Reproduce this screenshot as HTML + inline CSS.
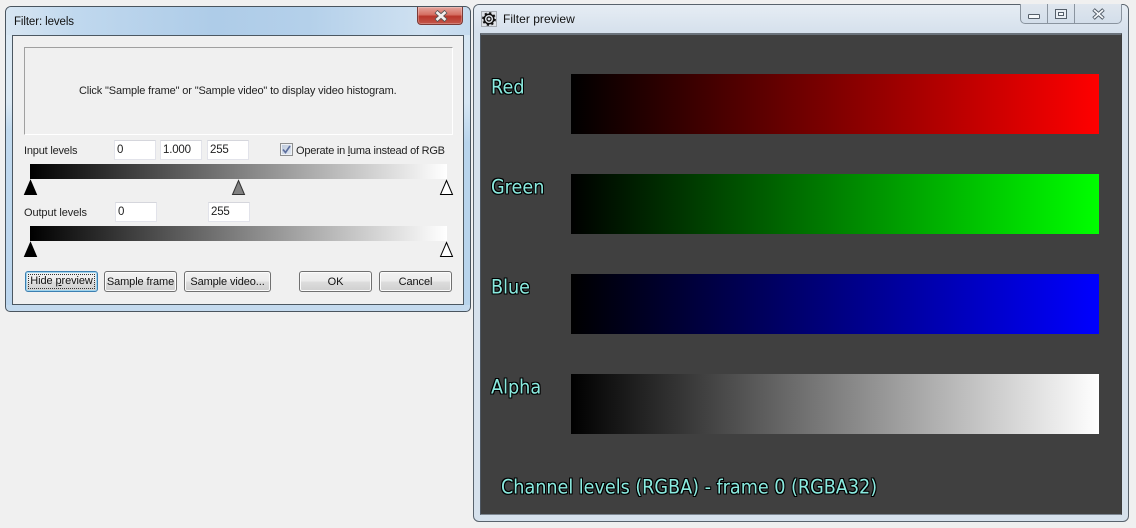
<!DOCTYPE html>
<html><head><meta charset="utf-8"><style>
html,body{margin:0;padding:0;width:1136px;height:528px;overflow:hidden;background:#f0f0f0;font-family:"Liberation Sans",sans-serif;}
div,span{position:absolute;box-sizing:border-box;}
.t{font-size:11px;color:#222;white-space:nowrap;letter-spacing:-.14px;line-height:14px;}
.in{background:#fff;border:1px solid #e2e3ea;border-top-color:#d5d6dc;height:20px;font-size:11.5px;line-height:19px;padding-left:2px;color:#222;letter-spacing:-.2px;}
.btn{top:271px;height:21px;border:1px solid #707070;border-radius:3px;background:linear-gradient(#f2f2f2 0,#ebebeb 48%,#dddddd 52%,#cfcfcf 100%);box-shadow:inset 0 0 0 1px #fbfbfb;font-size:11px;line-height:20px;text-align:center;color:#111;letter-spacing:-.1px;white-space:nowrap;}
.g{background:linear-gradient(90deg,#000,#fff);left:30px;width:417px;height:15px;}
.osd{font-family:"DejaVu Sans",sans-serif;font-size:18px;color:#8aeadf;white-space:nowrap;line-height:22px;transform-origin:0 50%;transform:scale(.98,1.08);text-shadow:1px 0 0 #000,-1px 0 0 #000,0 1px 0 #000,0 -1px 0 #000,1px 1px 0 #000,-1px -1px 0 #000,1px -1px 0 #000,-1px 1px 0 #000;}
.bar{left:571px;width:528px;height:60px;}
</style></head><body>

<!-- Left window -->
<div style="left:5px;top:6px;width:466px;height:306px;border:1px solid #4a555f;border-radius:6px 6px 5px 5px;background:#c4daee;"></div>
<div style="left:6px;top:7px;width:464px;height:28px;border-radius:5px 5px 0 0;background:linear-gradient(90deg,#d8e6f2 0,#c0d8ee 15%,#aecce8 45%,#b4d0ea 65%,#cfe1f1 90%,#c4daee 100%);"></div>
<div style="left:6px;top:35px;width:6px;height:270px;background:linear-gradient(#dbe9f4 0,#dbe9f4 25%,#c0d9ee 35%,#bcd6ee 100%);"></div>
<div style="left:464px;top:35px;width:6px;height:270px;background:linear-gradient(#d6e6f3 0,#d6e6f3 25%,#b8d4ec 40%,#b8d4ec 100%);"></div>
<div class="t" style="left:14px;top:15px;color:#111;font-size:11.5px;letter-spacing:-.1px;">Filter: levels</div>
<div style="left:417px;top:7px;width:46px;height:18px;border:1px solid #7a3a36;border-top:none;border-radius:0 0 4px 4px;background:linear-gradient(#e4a49c 0,#d66f62 45%,#b8352a 55%,#c4574a 100%);box-shadow:inset 0 0 0 1px rgba(255,255,255,.25);"></div>
<svg style="position:absolute;left:434px;top:10px" width="14" height="12"><path d="M2 1.5 L12 10.5 M12 1.5 L2 10.5" stroke="#555" stroke-width="4.4"/><path d="M2.5 2 L11.5 10 M11.5 2 L2.5 10" stroke="#f4efee" stroke-width="2.6"/></svg>

<div style="left:12px;top:35px;width:452px;height:270px;background:#f0f0f0;border:1px solid #4c5862;"></div>

<div style="left:24px;top:47px;width:429px;height:88px;border:1px solid;border-color:#a0a0a0 #ffffff #ffffff #a0a0a0;"></div>
<div class="t" style="left:79px;top:84px;">Click "Sample frame" or "Sample video" to display video histogram.</div>

<div class="t" style="left:24px;top:144px;letter-spacing:-.2px;">Input levels</div>
<div class="in" style="left:114px;top:140px;width:42px;">0</div>
<div class="in" style="left:160px;top:140px;width:42px;">1.000</div>
<div class="in" style="left:207px;top:140px;width:42px;">255</div>
<div style="left:280px;top:143px;width:13px;height:13px;border:1px solid #8e8f8f;background:linear-gradient(135deg,#bcc8da,#e4eaf3);box-shadow:inset 0 0 0 1px #eef1f6;"></div>
<svg style="position:absolute;left:280px;top:143px" width="13" height="13"><path d="M3 6.5 L5.5 9.5 L10 3" fill="none" stroke="#5d6f9e" stroke-width="1.7"/></svg>
<div class="t" style="left:296px;top:144px;letter-spacing:-.24px;">Operate in <u>l</u>uma instead of RGB</div>

<div class="g" style="top:164px;"></div>
<svg style="position:absolute;left:0;top:0" width="480" height="320">
<path d="M30.5 180.5 L36.5 194.5 L24.5 194.5 Z" fill="#000" stroke="#000"/>
<path d="M238.5 180.5 L244.5 194.5 L232.5 194.5 Z" fill="#808080" stroke="#333"/>
<path d="M446.5 180.5 L452.5 194.5 L440.5 194.5 Z" fill="#fff" stroke="#000"/>
<path d="M30.5 242.5 L36.5 256.5 L24.5 256.5 Z" fill="#000" stroke="#000"/>
<path d="M446.5 242.5 L452.5 256.5 L440.5 256.5 Z" fill="#fff" stroke="#000"/>
</svg>

<div class="t" style="left:24px;top:206px;letter-spacing:-.1px;">Output levels</div>
<div class="in" style="left:115px;top:202px;width:42px;">0</div>
<div class="in" style="left:208px;top:202px;width:42px;">255</div>
<div class="g" style="top:226px;"></div>

<div class="btn" style="left:25px;width:73px;border-color:#3c7fb1;box-shadow:0 0 0 1px #9fd4ee inset;"><u style="text-decoration:none;outline:1px dotted #333;outline-offset:-1px;display:block;margin:2px 2px;line-height:15px;">Hide <span style="position:static;text-decoration:underline;">p</span>review</u></div>
<div class="btn" style="left:104px;width:73px;">Sample frame</div>
<div class="btn" style="left:184px;width:87px;">Sample video...</div>
<div class="btn" style="left:299px;width:73px;">OK</div>
<div class="btn" style="left:379px;width:73px;">Cancel</div>

<!-- Right window -->
<div style="left:473px;top:4px;width:656px;height:518px;border:1px solid #59636d;border-radius:6px;background:#d6e1ec;"></div>
<div style="left:474px;top:5px;width:654px;height:28px;border-radius:5px 5px 0 0;background:linear-gradient(#e6edf4,#d5e0ec);"></div>
<svg style="position:absolute;left:481px;top:11px" width="16" height="16" viewBox="0 0 16 16"><rect x=".5" y=".5" width="15" height="15" fill="#dfe3e8" stroke="#8f959c" stroke-width=".7"/><circle cx="8" cy="8" r="4.8" fill="none" stroke="#111" stroke-width="1.5"/><circle cx="8" cy="8" r="6" fill="none" stroke="#111" stroke-width="1.8" stroke-dasharray="2.2 2.51"/><circle cx="8" cy="8" r="2" fill="none" stroke="#111" stroke-width="1.2"/></svg>
<div class="t" style="left:503px;top:12px;color:#111;font-size:12px;letter-spacing:.03px;">Filter preview</div>
<div style="left:1020px;top:4px;width:102px;height:20px;border:1px solid #8a949f;border-top:none;border-radius:0 0 5px 5px;background:linear-gradient(#dfe6ee,#d3deea);"></div>
<div style="left:1047px;top:4px;width:1px;height:19px;background:#8a949f;"></div>
<div style="left:1074px;top:4px;width:1px;height:19px;background:#8a949f;"></div>
<div style="left:1028px;top:14px;width:12px;height:5px;border:1px solid #555f6a;background:#f4f7fa;border-radius:1px;"></div>
<div style="left:1055px;top:9px;width:12px;height:10px;border:1px solid #555f6a;background:#e9eef4;"></div>
<div style="left:1058px;top:12px;width:6px;height:4px;border:1px solid #555f6a;background:#f8fafc;"></div>
<svg style="position:absolute;left:1091px;top:8px" width="15" height="12"><path d="M2.5 1.5 L12.5 10.5 M12.5 1.5 L2.5 10.5" stroke="#505a66" stroke-width="3.6"/><path d="M3 2 L12 10 M12 2 L3 10" stroke="#f4f7fa" stroke-width="1.8"/></svg>

<div style="left:480px;top:33px;width:642px;height:482px;background:#404040;border:1px solid #4c5560;border-top:2px solid #6a727b;border-bottom-color:#7d8791;border-right-color:#3c3c3c;"></div>

<div class="osd" style="left:491px;top:77px;">Red</div>
<div class="bar" style="top:74px;background:linear-gradient(90deg,#000,#f00);"></div>
<div class="osd" style="left:491px;top:177px;">Green</div>
<div class="bar" style="top:174px;background:linear-gradient(90deg,#000,#0f0);"></div>
<div class="osd" style="left:491px;top:277px;">Blue</div>
<div class="bar" style="top:274px;background:linear-gradient(90deg,#000,#00f);"></div>
<div class="osd" style="left:491px;top:377px;">Alpha</div>
<div class="bar" style="top:374px;background:linear-gradient(90deg,#000,#fff);"></div>
<div class="osd" style="left:501px;top:477px;letter-spacing:-.03px;">Channel levels (RGBA) - frame 0 (RGBA32)</div>

</body></html>
